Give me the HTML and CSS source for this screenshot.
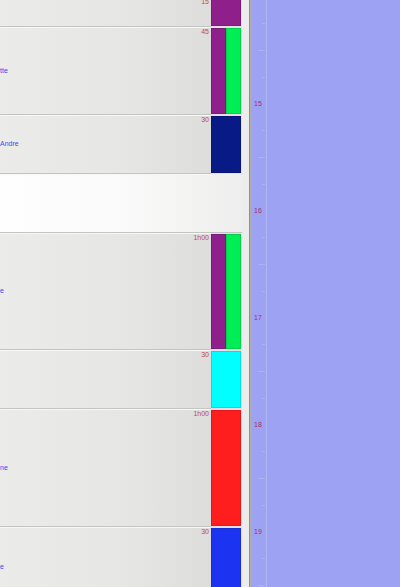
FILE: index.html
```html
<!DOCTYPE html>
<html>
<head>
<meta charset="utf-8">
<link rel="stylesheet" href="styles.css">
</head>
<body>
<div class="app">
  <div class="list">
    <div class="row r1">
      <div class="cell"><span class="name"></span><span class="dur">15</span></div>
      <div class="bars"><div class="bar purple"></div></div>
    </div>
    <div class="row r2">
      <div class="cell"><span class="name">tte</span><span class="dur">45</span></div>
      <div class="bars"><div class="bar purple"></div><div class="bar green"></div></div>
    </div>
    <div class="row r3">
      <div class="cell"><span class="name">Andre</span><span class="dur">30</span></div>
      <div class="bars"><div class="bar navy"></div></div>
    </div>
    <div class="row r3 empty">
      <div class="cell"></div>
      <div class="bars"></div>
    </div>
    <div class="row r4">
      <div class="cell"><span class="name">e</span><span class="dur">1h00</span></div>
      <div class="bars"><div class="bar purple"></div><div class="bar green"></div></div>
    </div>
    <div class="row r3">
      <div class="cell"><span class="name"></span><span class="dur">30</span></div>
      <div class="bars"><div class="bar cyan"></div></div>
    </div>
    <div class="row r6">
      <div class="cell"><span class="name">ne</span><span class="dur">1h00</span></div>
      <div class="bars"><div class="bar red"></div></div>
    </div>
    <div class="row r7">
      <div class="cell"><span class="name">e</span><span class="dur">30</span></div>
      <div class="bars"><div class="bar blue"></div></div>
    </div>
  </div>
  <div class="strip"></div>
  <div class="divider"></div>
  <div class="timeline">
    <div class="scale">
      <div class="slot"></div>
      <div class="slot"><span class="tick q"></span></div>
      <div class="slot"><span class="tick h"></span></div>
      <div class="slot"><span class="tick q"></span></div>
      <div class="slot"><span class="hour">15</span></div>
      <div class="slot"><span class="tick q"></span></div>
      <div class="slot"><span class="tick h"></span></div>
      <div class="slot"><span class="tick q"></span></div>
      <div class="slot"><span class="hour">16</span></div>
      <div class="slot"><span class="tick q"></span></div>
      <div class="slot"><span class="tick h"></span></div>
      <div class="slot"><span class="tick q"></span></div>
      <div class="slot"><span class="hour">17</span></div>
      <div class="slot"><span class="tick q"></span></div>
      <div class="slot"><span class="tick h"></span></div>
      <div class="slot"><span class="tick q"></span></div>
      <div class="slot"><span class="hour">18</span></div>
      <div class="slot"><span class="tick q"></span></div>
      <div class="slot"><span class="tick h"></span></div>
      <div class="slot"><span class="tick q"></span></div>
      <div class="slot"><span class="hour">19</span></div>
      <div class="slot"><span class="tick q"></span></div>
      <div class="slot"><span class="tick h"></span></div>
      <div class="slot"><span class="tick q"></span></div>
    </div>
  </div>
</div>
</body>
</html>
```
FILE: styles.css
```css
html, body {
  margin: 0;
  padding: 0;
  width: 400px;
  height: 587px;
  overflow: hidden;
  background: #9ea2f3;
  font-family: "Liberation Sans", Arial, sans-serif;
}

.app {
  display: flex;
  height: 587px;
  overflow: hidden;
}

.list {
  width: 242px;
  flex: none;
  display: flex;
  flex-direction: column;
  overflow: hidden;
  margin-top: -3px;
  background: #e2e2e2;
}

.row {
  display: flex;
  flex: none;
  box-sizing: border-box;
}
.r1 { height: 30px; }
.r2 { height: 88px; }
.r3 { height: 59px; }
.r4 { height: 117px; }
.r6 { height: 118px; }
.r7 { height: 80px; }

.cell {
  flex: 1;
  display: flex;
  box-sizing: border-box;
  background: linear-gradient(to right, #ebebea 0%, #e6e6e5 60%, #dddddc 100%);
  border-bottom: 1px solid #c4c4c4;
  box-shadow: inset 0 1px 0 #f7f7f7;
  overflow: hidden;
}
.empty .cell {
  background: linear-gradient(to right, #fefefe 0%, #fafafa 60%, #f1f1f0 100%);
}
.empty .bars {
  background: linear-gradient(to right, #f1f1f0, #eeeeee);
  border-bottom: 1px solid #c4c4c4;
}

.name {
  flex: 1;
  align-self: center;
  font-size: 7px;
  line-height: 8px;
  color: #4646ee;
  white-space: nowrap;
}

.dur {
  align-self: flex-start;
  font-size: 7px;
  line-height: 8px;
  padding: 1px 2px 0 0;
  color: #c24a4a;
  white-space: nowrap;
}

.bars {
  width: 31px;
  flex: none;
  display: flex;
  box-sizing: border-box;
  padding: 1px 1px 1px 0;
  background: #e6dde6;
}

.bar {
  flex: 1;
  box-sizing: border-box;
  border: 1px solid rgba(0, 0, 0, 0.12);
}
.purple { background: #8f1f8b; }
.green { background: #00ee55; }
.navy { background: #081a86; }
.cyan { background: #00ffff; }
.red { background: #ff1e1e; }
.blue { background: #1c34f2; }

.strip {
  width: 7px;
  flex: none;
  background: #ececec;
}

.divider {
  width: 1px;
  flex: none;
  background: #8e8e8e;
  border-right: 1px solid #b0b0b0;
}

.timeline {
  flex: 1;
  background:
    linear-gradient(to right, transparent 15px, #b3b6f5 15px, #b3b6f5 16px, transparent 16px),
    #9ea2f3;
  overflow: hidden;
}

.scale {
  margin-top: -16.4px;
  display: flex;
  flex-direction: column;
}

.slot {
  height: 26.75px;
  flex: none;
  display: flex;
  align-items: center;
}

.hour {
  margin-left: 3px;
  font-size: 7px;
  line-height: 8px;
  color: #a2306a;
}

.tick {
  height: 1px;
  background: #aeb1f2;
}
.tick.q {
  width: 3px;
  margin-left: 11px;
}
.tick.h {
  width: 7px;
  margin-left: 7px;
}
```
